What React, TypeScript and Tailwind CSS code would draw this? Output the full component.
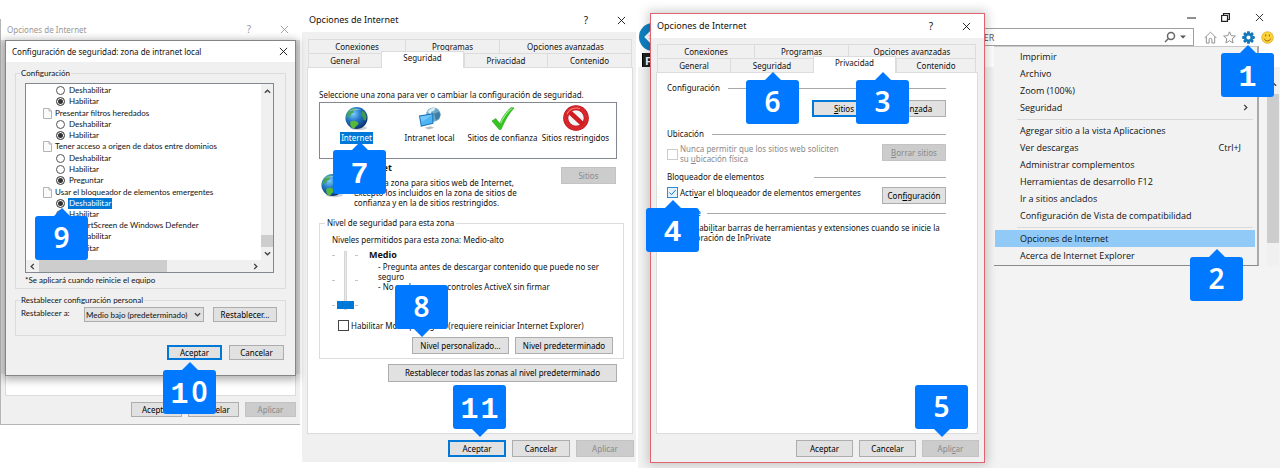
import type { ReactNode } from "react";

/* ---------- Shared pieces ---------- */

type ButtonProps = {
  children: ReactNode;
  className?: string;
  primary?: boolean;
  disabled?: boolean;
};

function PushButton({ children, className = "", primary, disabled }: ButtonProps) {
  const look = disabled
    ? "border border-[#c3c3c3] bg-[#cccccc] text-[#8a8a8a]"
    : primary
      ? "border-2 border-[#0078d7] bg-[#e1e1e1] text-black"
      : "border border-[#adadad] bg-[#e1e1e1] text-black";
  return (
    <button
      type="button"
      disabled={disabled}
      className={`flex shrink-0 items-center justify-center whitespace-nowrap ${look} ${className}`}
    >
      {children}
    </button>
  );
}

function CloseGlyph({ className = "" }: { className?: string }) {
  return (
    <svg viewBox="0 0 10 10" className={`size-[9px] ${className}`} fill="none" stroke="currentColor">
      <path d="M1 1 9 9M9 1 1 9" />
    </svg>
  );
}

function Chevron({ turn = "" }: { turn?: string }) {
  return (
    <svg viewBox="0 0 8 8" className={`size-[7px] ${turn}`} fill="none" stroke="#444" strokeWidth="1.6">
      <path d="M1 5.5 4 2.5 7 5.5" />
    </svg>
  );
}

function TitleBar({ title, help, className = "" }: { title: string; help?: boolean; className?: string }) {
  return (
    <header className={`flex shrink-0 items-center bg-white ${className}`}>
      <h2 className="flex-1 whitespace-nowrap">{title}</h2>
      {help && (
        <button type="button" aria-label="Ayuda" className="mr-[25px] w-3 text-[10px]">
          ?
        </button>
      )}
      <button type="button" aria-label="Cerrar">
        <CloseGlyph />
      </button>
    </header>
  );
}

type Slab = { char: string; slab: boolean };

function Callout({ digits, point, className }: { digits: Slab[]; point: "up" | "down"; className: string }) {
  return (
    <div className={`absolute z-30 h-[44px] w-[53px] rounded-[3px] bg-[#0078ff] ${className}`}>
      <div className="flex h-full items-center justify-center text-white">
        {digits.map((d, i) => (
          <span
            key={i}
            className={
              d.slab
                ? "w-5 pt-[5px] text-center font-['Liberation_Mono',monospace] text-[30px] leading-none font-bold"
                : "w-5 pb-[2px] text-center font-['Noto_Sans',sans-serif] text-[28px] leading-none font-semibold"
            }
          >
            {d.char}
          </span>
        ))}
      </div>
      <svg
        viewBox="0 0 18 9"
        className={`absolute left-[18px] h-[9px] w-[18px] ${point === "up" ? "-top-2" : "-bottom-2 rotate-180"}`}
        fill="#0078ff"
      >
        <path d="M0 9 9 0l9 9z" />
      </svg>
    </div>
  );
}

const plain = (char: string): Slab => ({ char, slab: false });
const slab = (char: string): Slab => ({ char, slab: true });

function Tab({ label, active, className }: { label: string; active?: boolean; className: string }) {
  return (
    <button
      type="button"
      role="tab"
      aria-selected={!!active}
      className={
        active
          ? `relative z-10 -mt-[2px] -mb-px border-x border-t border-[#dcdcdc] bg-white pb-1 ${className}`
          : `border-t border-l border-[#dcdcdc] bg-[#f0f0f0] last:border-r ${className}`
      }
    >
      {label}
    </button>
  );
}

function Tabs({ active, className = "" }: { active: string; className?: string }) {
  return (
    <div role="tablist" className={`flex flex-col leading-[10px] ${className}`}>
      <div className="flex h-[14px]">
        <Tab label="Conexiones" className="w-[97px]" />
        <Tab label="Programas" className="w-[94px]" />
        <Tab label="Opciones avanzadas" className="flex-1" />
      </div>
      <div className="flex h-[14px]">
        <Tab label="General" active={active === "General"} className="w-[73px]" />
        <Tab label="Seguridad" active={active === "Seguridad"} className="w-[83px]" />
        <Tab label="Privacidad" active={active === "Privacidad"} className="w-[83px]" />
        <Tab label="Contenido" active={active === "Contenido"} className="flex-1" />
      </div>
    </div>
  );
}

/* ---------- Icons ---------- */

function Globe({ id, className = "size-[25px]" }: { id: string; className?: string }) {
  return (
    <svg viewBox="0 0 26 26" className={className}>
      <defs>
        <radialGradient id={id} cx="0.35" cy="0.3" r="0.75">
          <stop offset="0" stopColor="#7fd0fa" />
          <stop offset="0.45" stopColor="#2479c9" />
          <stop offset="1" stopColor="#082f6e" />
        </radialGradient>
      </defs>
      <ellipse cx="15" cy="23" rx="9" ry="2.2" fill="#000" opacity="0.18" />
      <circle cx="13" cy="12.500" r="11.5" fill={`url(#${id})`} />
      <path d="M2.500 9C4 5 7 3 10 2l2 1-2 2 .5 1.500-3 1.500-1 2.500-2.500.5-1.500 2z" fill="#45a352" opacity="0.9" />
      <path d="M6.500 16.500l4-1.500 4 2 .5 2-2.500 2-2 2.500-2.500-1-1.500-2.500z" fill="#58b83a" />
      <path d="M19 5l3 2 1.500 4.500-1 3.500-2-.5-1-3-2-2z" fill="#3c9a4a" />
      <path d="M5 5.500C8 2.500 14 2 18 4c-4 0-9 1-13 1.500z" fill="#fff" opacity="0.35" />
    </svg>
  );
}

function IntranetIcon() {
  return (
    <svg viewBox="0 0 26 26" className="size-[25px]">
      <circle cx="17" cy="9" r="7.500" fill="#6ea9c8" />
      <path d="M11 6c2-3 5-4.500 8-4l-1 3-3 1-1 3z" fill="#d4ecf4" />
      <path d="M18 8l5-2 1.500 3-2 4.500-3 1z" fill="#3f7ea3" />
      <path d="M8 22.500l6-1.500 4 1.500-6 2z" fill="#b6bcc2" />
      <path d="M2 10l15-2.500v11L4 21.500z" fill="#1c6fb4" />
      <path d="M3.200 11L16 8.800v8.800L4.800 20.200z" fill="#4db4f5" />
      <path d="M3.200 11L16 8.800 5 17z" fill="#8fd3ff" opacity="0.6" />
    </svg>
  );
}

function CheckIcon() {
  return (
    <svg viewBox="0 0 26 26" className="size-[25px]">
      <path d="M2 15.500l4-2.500 4 5C13 11 17.500 5 22 1.500l3 .5C19.500 8 15 16 11.500 24.500H9.500z" fill="#35c321" stroke="#1f9a12" strokeWidth="0.5" />
      <path d="M11 18c3-6.500 7-12 11.500-15.500" stroke="#9df08b" strokeWidth="1.200" fill="none" />
    </svg>
  );
}

function ForbiddenIcon() {
  return (
    <svg viewBox="0 0 26 26" className="size-[26px]">
      <circle cx="13" cy="13" r="10.300" fill="#f4f4f4" stroke="#a80f12" strokeWidth="5" />
      <circle cx="13" cy="13" r="10.300" fill="none" stroke="#d8262a" strokeWidth="4" />
      <path d="M6 6.500 20 19.500" stroke="#d01c20" strokeWidth="4.500" />
      <path d="M4 9C6 4 12 2 17 3.500" fill="none" stroke="#f28083" strokeWidth="1.200" />
    </svg>
  );
}

function PageIcon() {
  return (
    <svg viewBox="0 0 9 11" className="h-[11px] w-[9px] shrink-0">
      <path d="M.5.500h5.500l2.500 2.500v7.500h-8z" fill="#fafafa" stroke="#b4b4b4" />
      <path d="M6 .5V3h2.500" fill="none" stroke="#b4b4b4" />
    </svg>
  );
}

/* ---------- Security settings dialog ---------- */

type Entry = { kind: "group" | "option"; text: string; set?: string; checked?: boolean; selected?: boolean };

const entries: Entry[] = [
  { kind: "option", text: "Deshabilitar", set: "a" },
  { kind: "option", text: "Habilitar", set: "a", checked: true },
  { kind: "group", text: "Presentar filtros heredados" },
  { kind: "option", text: "Deshabilitar", set: "b" },
  { kind: "option", text: "Habilitar", set: "b", checked: true },
  { kind: "group", text: "Tener acceso a origen de datos entre dominios" },
  { kind: "option", text: "Deshabilitar", set: "c" },
  { kind: "option", text: "Habilitar", set: "c" },
  { kind: "option", text: "Preguntar", set: "c", checked: true },
  { kind: "group", text: "Usar el bloqueador de elementos emergentes" },
  { kind: "option", text: "Deshabilitar", set: "d", checked: true, selected: true },
  { kind: "option", text: "Habilitar", set: "d" },
  { kind: "group", text: "Usar SmartScreen de Windows Defender" },
  { kind: "option", text: "Deshabilitar", set: "e" },
  { kind: "option", text: "Habilitar", set: "e" },
];

function EntryRow({ entry }: { entry: Entry }) {
  if (entry.kind === "group") {
    return (
      <li className="flex items-center gap-[3px] pl-[17px]">
        <PageIcon />
        <span>{entry.text}</span>
      </li>
    );
  }
  return (
    <li className="pl-[30px]">
      <label className="flex items-center gap-[3px]">
        <input
          type="radio"
          name={entry.set}
          defaultChecked={entry.checked}
          className="size-[9px] shrink-0 appearance-none rounded-full border border-[#555] bg-white checked:bg-[#333] checked:shadow-[inset_0_0_0_1px_#fff]"
        />
        <span className={entry.selected ? "bg-[#0078d7] px-px text-white" : "px-px"}>{entry.text}</span>
      </label>
    </li>
  );
}

function SecuritySettings() {
  return (
    <section className="absolute top-[21px] left-[4px] z-10 flex w-[291px] flex-col border border-[#858585] bg-[#f0f0f0] pb-[15px] shadow-[0_2px_8px_2px_rgba(0,0,0,0.3)]">
      <TitleBar title="Configuración de seguridad: zona de intranet local" className="h-[21px] pr-[7px] pl-[6px]" />
      <fieldset className="mx-[9px] mt-[6px] border border-[#dcdcdc] px-[9px] pb-[3px] font-['Lato',sans-serif]">
        <legend className="-ml-[5px] px-px leading-[10px]">Configuración</legend>
        <div className="mt-[5px] mr-[2px] flex h-[190px] flex-col border border-[#828790] bg-white">
          <div className="flex flex-1">
            <ul className="mt-px grid h-[169px] flex-1 auto-rows-fr leading-[11px] whitespace-nowrap">
              {entries.map((entry, i) => (
                <EntryRow key={i} entry={entry} />
              ))}
            </ul>
            <div className="flex w-[12px] flex-col items-center bg-[#f0f0f0] pt-1 pb-[3px]">
              <Chevron />
              <div className="mt-auto mb-[3px] h-[12px] w-full bg-[#cdcdcd]" />
              <Chevron turn="rotate-180" />
            </div>
          </div>
          <div className="flex h-[12px] items-center bg-[#f0f0f0] pr-[14px] pl-[3px]">
            <Chevron turn="-rotate-90" />
            <div className="ml-[3px] h-full w-[128px] bg-[#cdcdcd]" />
            <div className="ml-auto">
              <Chevron turn="rotate-90" />
            </div>
          </div>
        </div>
        <p className="mt-[2px] leading-[10px]">*Se aplicará cuando reinicie el equipo</p>
      </fieldset>
      <fieldset className="mx-[9px] mt-[6px] border border-[#dcdcdc] px-[5px] pb-[13px]">
        <legend className="-ml-px px-px font-['Lato',sans-serif] leading-[10px]">Restablecer configuración personal</legend>
        <div className="flex items-center pt-[2px]">
          <label htmlFor="reset-level" className="w-[63px] pb-1 font-['Lato',sans-serif] leading-[10px]">
            Restablecer a:
          </label>
          <div className="relative flex h-[15px] w-[120px]">
            <select
              id="reset-level"
              className="h-full w-full appearance-none border border-[#adadad] bg-[#e1e1e1] pl-px font-['Lato',sans-serif] leading-[10px]"
            >
              <option>Medio bajo (predeterminado)</option>
            </select>
            <span className="pointer-events-none absolute top-1 right-[3px]">
              <Chevron turn="rotate-180" />
            </span>
          </div>
          <PushButton className="ml-[9px] h-[15px] w-[64px]">Restablecer...</PushButton>
        </div>
      </fieldset>
      <div className="mt-[9px] flex justify-end gap-[7px] pr-[11px]">
        <PushButton primary className="h-[15px] w-[55px]">
          Aceptar
        </PushButton>
        <PushButton className="h-[15px] w-[55px]">Cancelar</PushButton>
      </div>
    </section>
  );
}

function SettingsStack() {
  return (
    <section className="absolute top-[19px] left-0 flex h-[406px] w-[300px] flex-col border-b border-l border-[#b5b5b5] bg-[#f0f0f0]">
      <TitleBar title="Opciones de Internet" help className="h-[21px] pr-[11px] pl-[6px] text-[#999]" />
      <div className="flex-1 bg-[#dedede]" />
      <div className="flex h-[50px] flex-col px-[4px]">
        <div className="h-[22px] border border-[#dcdcdc] bg-white" />
        <div className="mt-[6px] flex justify-end gap-[6px]">
          <PushButton className="h-[15px] w-[51px]">Aceptar</PushButton>
          <PushButton className="h-[15px] w-[51px]">Cancelar</PushButton>
          <PushButton disabled className="h-[15px] w-[51px]">
            Aplicar
          </PushButton>
        </div>
      </div>
      <SecuritySettings />
    </section>
  );
}

/* ---------- Security tab window ---------- */

function Zone({ icon, label, selected }: { icon: ReactNode; label: string; selected?: boolean }) {
  return (
    <button type="button" className="flex flex-col items-center whitespace-nowrap">
      <span className="flex h-[28px] items-center">{icon}</span>
      <span className={`px-px leading-[12px] ${selected ? "bg-[#0078d7] text-white" : ""}`}>{label}</span>
    </button>
  );
}

function LevelSlider() {
  const tick = "flex h-px w-[26px] justify-between before:w-[3px] before:bg-[#c4c4c4] after:w-[3px] after:bg-[#c4c4c4]";
  return (
    <div className="relative mt-px flex h-[59px] w-[26px] justify-center">
      <div className="absolute inset-0 flex flex-col justify-between pt-1 pb-1">
        <div className={tick} />
        <div className={tick} />
        <div className={tick} />
      </div>
      <input
        type="range"
        min={0}
        max={2}
        defaultValue={0}
        aria-label="Nivel de seguridad"
        className="relative h-[59px] w-[18px] appearance-none bg-transparent [direction:rtl] [writing-mode:vertical-lr] [&::-webkit-slider-runnable-track]:h-[59px] [&::-webkit-slider-runnable-track]:w-[3px] [&::-webkit-slider-runnable-track]:border [&::-webkit-slider-runnable-track]:border-[#d6d6d6] [&::-webkit-slider-runnable-track]:bg-[#e7eaea] [&::-webkit-slider-thumb]:-ml-2 [&::-webkit-slider-thumb]:h-[8px] [&::-webkit-slider-thumb]:w-[17px] [&::-webkit-slider-thumb]:appearance-none [&::-webkit-slider-thumb]:bg-[#0078d7]"
      />
    </div>
  );
}

function SecurityWindow() {
  return (
    <section className="absolute top-[8px] left-[302px] flex h-[454px] w-[334px] flex-col bg-[#f0f0f0]">
      <TitleBar title="Opciones de Internet" help className="h-[24px] pr-[10px] pl-[7px] text-[9px]" />
      <Tabs active="Seguridad" className="mt-[7px] mr-[4px] ml-[6px]" />
      <div className="mr-[3px] ml-[5px] flex flex-1 flex-col border border-[#dcdcdc] bg-white pr-[8px] pl-[11px]">
        <p className="mt-[22px] leading-[10px] whitespace-nowrap">
          Seleccione una zona para ver o cambiar la configuración de seguridad.
        </p>
        <div className="mt-[2px] mr-[7px] grid h-[57px] grid-cols-4 items-start border border-[#828790] pt-px pr-[4px]">
          <Zone icon={<Globe id="zone-globe" />} label="Internet" selected />
          <Zone icon={<IntranetIcon />} label="Intranet local" />
          <Zone icon={<CheckIcon />} label="Sitios de confianza" />
          <Zone icon={<ForbiddenIcon />} label="Sitios restringidos" />
        </div>
        <div className="mt-[4px] flex">
          <div className="w-[35px] pt-[10px] pl-px">
            <Globe id="detail-globe" />
          </div>
          <div className="flex-1 leading-[10px] whitespace-nowrap">
            <h3 className="mb-[5px] text-[9px] font-bold">Internet</h3>
            <p>
              Esta es la zona para sitios web de Internet,
              <br />
              excepto los incluidos en la zona de sitios de
              <br />
              confianza y en la de sitios restringidos.
            </p>
          </div>
          <PushButton disabled className="mt-[4px] mr-[8px] h-[17px] w-[55px]">
            Sitios
          </PushButton>
        </div>
        <fieldset className="mt-[10px] border border-[#dcdcdc] pr-[10px] pb-[4px] pl-[12px]">
          <legend className="-ml-[7px] px-[2px] leading-[10px]">Nivel de seguridad para esta zona</legend>
          <p className="mt-[7px] leading-[10px]">Niveles permitidos para esta zona: Medio-alto</p>
          <div className="mt-[5px] flex gap-[11px] whitespace-nowrap">
            <LevelSlider />
            <div className="leading-[10px]">
              <h3 className="mb-[2px] text-[9px] font-bold">Medio</h3>
              <p className="pl-[9px]">
                - Pregunta antes de descargar contenido que puede no ser
                <br />
                seguro
                <br />- No se descargan controles ActiveX sin firmar
              </p>
            </div>
          </div>
          <label className="mt-[10px] ml-[6px] flex items-center gap-[2px] leading-[10px] whitespace-nowrap">
            <input type="checkbox" className="size-[11px] appearance-none border border-[#444] bg-white" />
            Habilitar Modo protegido (requiere reiniciar Internet Explorer)
          </label>
          <div className="mt-[6px] flex justify-end gap-[6px]">
            <PushButton className="h-[17px] w-[97px]">Nivel personalizado...</PushButton>
            <PushButton className="h-[17px] w-[98px]">Nivel predeterminado</PushButton>
          </div>
        </fieldset>
        <PushButton className="mt-[5px] mr-[7px] h-[18px] w-[229px] self-end">
          Restablecer todas las zonas al nivel predeterminado
        </PushButton>
      </div>
      <footer className="mt-[6px] mb-[5px] flex justify-end gap-[6px] pr-[2px]">
        <PushButton primary className="h-[17px] w-[58px]">
          Aceptar
        </PushButton>
        <PushButton className="h-[17px] w-[58px]">Cancelar</PushButton>
        <PushButton disabled className="h-[17px] w-[58px]">
          Aplicar
        </PushButton>
      </footer>
    </section>
  );
}

/* ---------- Privacy tab window ---------- */

function Heading({ children, gap = "gap-[8px]" }: { children: ReactNode; gap?: string }) {
  return (
    <h3 className={`flex items-center leading-[10px] whitespace-nowrap ${gap}`}>
      {children}
      <span className="h-px flex-1 bg-[#a8a8a8]" />
    </h3>
  );
}

function PrivacyWindow() {
  return (
    <section className="absolute top-[13px] left-[650px] z-10 flex h-[450px] w-[335px] flex-col border border-[#e0646f] bg-[#f0f0f0] shadow-[0_0_10px_2px_rgba(0,0,0,0.2)]">
      <TitleBar title="Opciones de Internet" help className="h-[24px] pr-[13px] pl-[6px] text-[9px]" />
      <Tabs active="Privacidad" className="mt-[6px] mr-[8px] ml-[6px]" />
      <div className="mr-[6px] ml-[5px] flex flex-1 flex-col border border-[#dcdcdc] bg-white pr-[31px] pl-[10px]">
        <div className="mt-[10px]">
          <Heading>Configuración</Heading>
        </div>
        <div className="mt-[7px] flex justify-end gap-[6px]">
          <PushButton primary className="h-[17px] w-[64px]">
            <span>
              <u>S</u>itios
            </span>
          </PushButton>
          <PushButton className="h-[17px] w-[64px]">
            <span>
              Avan<u>z</u>ada
            </span>
          </PushButton>
        </div>
        <div className="mt-[12px]">
          <Heading>Ubicación</Heading>
        </div>
        <div className="mt-[5px] flex items-start">
          <label className="flex flex-1 items-center gap-[2px] leading-[10px] whitespace-nowrap text-[#8a8a8a]">
            <input type="checkbox" disabled className="size-[11px] appearance-none border border-[#ccc] bg-white" />
            <span>
              Nunca permitir que los sitios web soliciten
              <br />
              su <u>u</u>bicación física
            </span>
          </label>
          <PushButton disabled className="h-[17px] w-[64px]">
            <span>
              <u>B</u>orrar sitios
            </span>
          </PushButton>
        </div>
        <div className="mt-[8px]">
          <Heading gap="gap-[50px]">Bloqueador de elementos</Heading>
        </div>
        <div className="mt-[5px] flex items-start">
          <label className="flex flex-1 items-center gap-[2px] leading-[10px] whitespace-nowrap">
            <span className="relative flex">
              <input
                type="checkbox"
                defaultChecked
                className="size-[11px] appearance-none border border-[#2e8ad8] bg-[#e5f2fc]"
              />
              <svg viewBox="0 0 11 11" className="pointer-events-none absolute inset-0" fill="none" stroke="#1778cc">
                <path d="M2.500 5.500 4.500 7.700 8.700 3" />
              </svg>
            </span>
            <span>
              Acti<u>v</u>ar el bloqueador de elementos emergentes
            </span>
          </label>
          <PushButton className="h-[17px] w-[64px]">
            <span>
              Con<u>fi</u>guración
            </span>
          </PushButton>
        </div>
        <div className="mt-[4px]">
          <Heading gap="gap-[6px]">InPrivate</Heading>
        </div>
        <label className="mt-[5px] flex items-start gap-[2px] leading-[10px] whitespace-nowrap">
          <input type="checkbox" defaultChecked className="size-[11px] appearance-none border border-[#444] bg-white" />
          <span>
            Deshabi<u>l</u>itar barras de herramientas y extensiones cuando se inicie la
            <br />
            exploración de InPrivate
          </span>
        </label>
      </div>
      <footer className="mt-[6px] mb-[5px] flex justify-end gap-[6px] pr-[5px]">
        <PushButton className="h-[17px] w-[57px]">Aceptar</PushButton>
        <PushButton className="h-[17px] w-[57px]">Cancelar</PushButton>
        <PushButton disabled className="h-[17px] w-[57px]">
          <span>
            Apli<u>c</u>ar
          </span>
        </PushButton>
      </footer>
    </section>
  );
}

/* ---------- Browser ---------- */

function MenuItem({ label, hint, active }: { label: string; hint?: ReactNode; active?: boolean }) {
  return (
    <li>
      <button
        type="button"
        className={`flex h-[17px] w-full items-center justify-between pr-[14px] pl-[25px] whitespace-nowrap ${active ? "bg-[#91c9f7]" : ""}`}
      >
        <span>{label}</span>
        {hint}
      </button>
    </li>
  );
}

function ToolsMenu() {
  const rule = <li className="mt-[3px] mr-[2px] mb-[2px] ml-[22px] h-px bg-[#d9d9d9]" />;
  return (
    <ul className="absolute top-[46px] right-[21px] z-20 w-[265px] border-t border-r-2 border-b border-t-[#c8c8c8] border-r-[#a9a9a9] border-b-[#8a8a8a] bg-[#f2f2f2] py-px pr-[2px] pl-px font-['Open_Sans',sans-serif] text-[9px] leading-[12px] text-[#111]">
      <MenuItem label="Imprimir" />
      <MenuItem label="Archivo" />
      <MenuItem label="Zoom (100%)" />
      <MenuItem
        label="Seguridad"
        hint={
          <span className="-mr-2">
            <Chevron turn="rotate-90" />
          </span>
        }
      />
      {rule}
      <MenuItem label="Agregar sitio a la vista Aplicaciones" />
      <MenuItem label="Ver descargas" hint={<span>Ctrl+J</span>} />
      <MenuItem label="Administrar complementos" />
      <MenuItem label="Herramientas de desarrollo F12" />
      <MenuItem label="Ir a sitios anclados" />
      <MenuItem label="Configuración de Vista de compatibilidad" />
      {rule}
      <MenuItem label="Opciones de Internet" active />
      <MenuItem label="Acerca de Internet Explorer" />
    </ul>
  );
}

const teeth = [0, 45, 90, 135, 180, 225, 270, 315];

function BrowserWindow() {
  return (
    <section className="absolute top-0 right-0 bottom-0 left-[638px] flex flex-col overflow-hidden bg-white">
      <header className="flex h-[28px] shrink-0 items-center justify-end gap-[25px] pt-[7px] pr-[16px] text-[#222]">
        <button type="button" aria-label="Minimizar">
          <svg viewBox="0 0 9 9" className="size-[9px]" stroke="currentColor">
            <path d="M0 5h9" />
          </svg>
        </button>
        <button type="button" aria-label="Restaurar">
          <svg viewBox="0 0 9 9" className="size-[9px]" fill="none" stroke="currentColor" strokeWidth="1.200">
            <path d="M.6 2.500h5.900v5.900H.6zM2.500 2.500V.6h5.900v5.900H6.500" />
          </svg>
        </button>
        <button type="button" aria-label="Cerrar">
          <CloseGlyph />
        </button>
      </header>
      <div className="flex h-[18px] shrink-0 items-center">
        <button type="button" aria-label="Atrás" className="relative z-10 ml-px shrink-0">
          <svg viewBox="0 0 28 28" className="size-[28px]">
            <circle cx="14" cy="14" r="14" fill="#0f7fc0" />
            <path d="M22 14H7M13 8l-6 6 6 6" fill="none" stroke="#fff" strokeWidth="2.500" />
          </svg>
        </button>
        <div className="ml-3 flex h-[18px] flex-1 items-center border border-[#a0a0a0] bg-white">
          <input
            type="text"
            aria-label="Dirección"
            defaultValue="CER"
            className="h-[14px] min-w-0 flex-1 pl-[298px] font-['Open_Sans',sans-serif] text-[9px] text-[#555] outline-none"
          />
          <svg viewBox="0 0 12 12" className="mr-[4px] size-[12px]" fill="none" stroke="#666" strokeWidth="1.500">
            <circle cx="7" cy="5" r="3.500" />
            <path d="M4.500 7.500 1 11" />
          </svg>
          <svg viewBox="0 0 6 4" className="mr-[7px] h-[4px] w-[6px]" fill="#555">
            <path d="M0 .5h6l-3 3z" />
          </svg>
        </div>
        <div className="flex items-center gap-[6px] pr-[6px] pl-[10px]">
          <svg viewBox="0 0 14 14" className="size-[13px]" fill="none" stroke="#8a8a8a">
            <path d="M.7 7.500 7 1.200l6.300 6.300M2.500 6v7h3V9.500a1.500 1.500 0 0 1 3 0V13h3V6" />
          </svg>
          <svg viewBox="0 0 14 14" className="size-[13px]" fill="none" stroke="#8a8a8a">
            <path d="M7 .9 8.800 5l4.500.4-3.400 3 1 4.500L7 10.500l-3.900 2.400 1-4.500-3.400-3L5.200 5z" />
          </svg>
          <svg viewBox="0 0 14 14" className="size-[13px]">
            {teeth.map((angle) => (
              <path key={angle} d="M5.200 3 5.600.2h2.800L8.800 3z" fill="#1478b8" transform={`rotate(${angle} 7 7)`} />
            ))}
            <circle cx="7" cy="7" r="3.500" fill="none" stroke="#1478b8" strokeWidth="2.600" />
          </svg>
          <svg viewBox="0 0 14 14" className="size-[13px]">
            <circle cx="7" cy="7" r="6.300" fill="#fbd23a" stroke="#d9a51c" strokeWidth="0.700" />
            <path d="M5 3.800v2M9 3.800v2M3.500 8.200c1 3.200 6 3.200 7 0" fill="none" stroke="#8a5a10" />
          </svg>
        </div>
      </div>
      <div className="flex h-[21px] shrink-0 items-end bg-white">
        <span className="ml-[4px] flex h-[14px] w-4 items-center border-l border-black bg-[#222] pl-[2px] text-[11px] leading-none font-bold text-white">
          F
        </span>
      </div>
      <div className="flex flex-1 items-start justify-end bg-[#f3f3f3]">
        <div className="mr-px flex h-[199px] w-[12px] flex-col items-center bg-[#f0f0f0] pt-[14px]">
          <Chevron />
          <div className="mt-[6px] h-[149px] w-full bg-[#cdcdcd]" />
        </div>
      </div>
      <ToolsMenu />
      <Callout digits={[slab("1")]} point="up" className="top-[53px] right-[6px]" />
      <Callout digits={[plain("2")]} point="up" className="top-[257px] right-[37px]" />
    </section>
  );
}

export default function App() {
  return (
    <main className="relative min-h-screen w-full overflow-hidden bg-white font-['Noto_Sans',sans-serif] text-[8px] text-[#111]">
      <SettingsStack />
      <SecurityWindow />
      <BrowserWindow />
      <PrivacyWindow />
      <Callout digits={[plain("9")]} point="up" className="top-[216px] left-[35px]" />
      <Callout digits={[slab("1"), plain("0")]} point="up" className="top-[370px] left-[163px]" />
      <Callout digits={[slab("7")]} point="up" className="top-[150px] left-[333px]" />
      <Callout digits={[plain("8")]} point="down" className="top-[285px] left-[395px]" />
      <Callout digits={[slab("1"), slab("1")]} point="down" className="top-[385px] left-[453px]" />
      <Callout digits={[plain("6")]} point="up" className="top-[80px] left-[746px]" />
      <Callout digits={[plain("3")]} point="up" className="top-[80px] left-[856px]" />
      <Callout digits={[slab("4")]} point="up" className="top-[208px] left-[646px]" />
      <Callout digits={[plain("5")]} point="down" className="top-[385px] left-[915px]" />
    </main>
  );
}
